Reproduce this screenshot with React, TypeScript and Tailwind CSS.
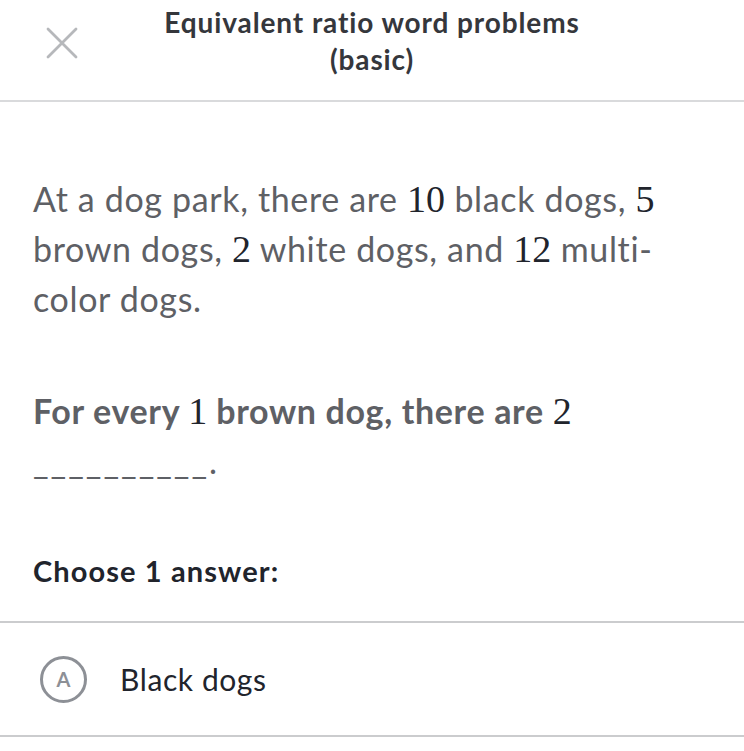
import React from 'react';

function Num({ children }: { children: React.ReactNode }) {
  return (
    <span className="text-[38px] leading-[50px] tracking-normal text-[#21242c] font-normal [font-family:'Liberation_Serif',serif]">
      {children}
    </span>
  );
}

function CloseIcon() {
  return (
    <svg width="32" height="32" viewBox="0 0 32 32" fill="none" stroke="#b6b8bb" strokeWidth="2.8" strokeLinecap="round">
      <path d="M2 2 L30 30 M30 2 L2 30" />
    </svg>
  );
}

export default function App() {
  return (
    <div className="min-h-screen bg-white [font-family:Lato,'Noto_Sans',sans-serif]">
      {/* header */}
      <header className="relative h-[102px] border-b-2 border-[#d9dadc] pt-[4px]">
        <div className="absolute left-[46px] top-[27px]">
          <CloseIcon />
        </div>
        <h1 className="text-center text-[28px] leading-[37px] font-bold tracking-[0.9px] text-[#35373c]">
          Equivalent ratio word problems
          <br />
          (basic)
        </h1>
      </header>

      <main className="px-[33px]">
        <p className="mt-[72px] text-[34px] leading-[50px] tracking-[0.65px] text-[#5e6065]">
          At a dog park, there are <Num>10</Num> black dogs, <Num>5</Num> brown dogs, <Num>2</Num> white dogs, and{' '}
          <Num>12</Num> multi-color dogs.
        </p>

        <p className="mt-[62px] text-[34px] leading-[50px] font-bold tracking-[0.65px] text-[#5e6065]">
          For every <Num>1</Num> brown dog, there are <Num>2</Num>{' '}
          <span className="font-normal tracking-[2px]">__________</span>
          <span className="font-normal">.</span>
        </p>

        <p className="mt-[67px] text-[29px] leading-[36px] font-bold tracking-[1.1px] text-[#21242c]">Choose 1 answer:</p>
      </main>

      <div className="mt-[32px] border-t-2 border-b-2 border-[#cbccce]">
        <div className="flex h-[112px] items-center pl-[40px]">
          <div className="flex h-[47px] w-[47px] items-center justify-center rounded-full border-[3px] border-[#8d9096] text-[20px] font-bold text-[#8d9096]">
            A
          </div>
          <span className="ml-[33px] text-[30px] tracking-[0.6px] text-[#21242c]">Black dogs</span>
        </div>
      </div>
    </div>
  );
}
